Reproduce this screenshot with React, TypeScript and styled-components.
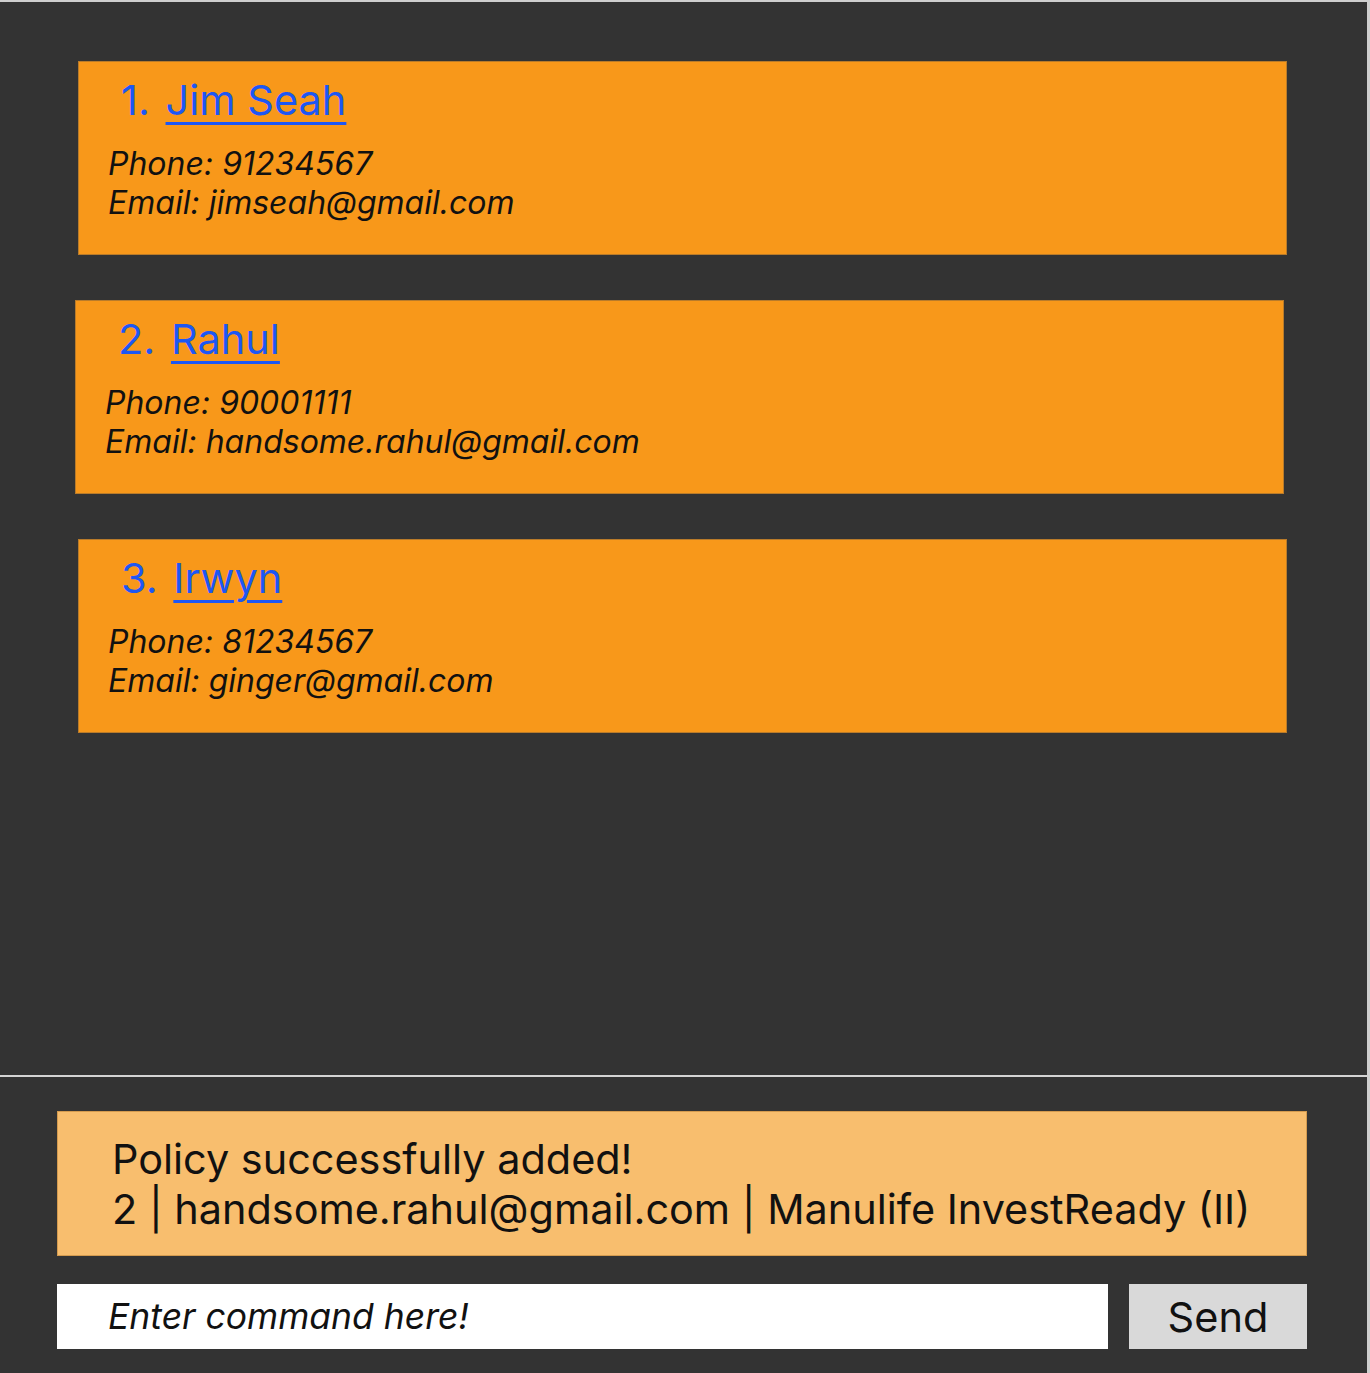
import React from "react";
import styled, { createGlobalStyle } from "styled-components";

const Global = createGlobalStyle`
  html, body { margin: 0; padding: 0; background: #333333; }
  body { font-family: Inter, "Noto Sans", "Liberation Sans", sans-serif; }
  * { box-sizing: border-box; }
`;

const Frame = styled.div`
  height: 1373px;
  width: 1370px;
  display: flex;
  flex-direction: column;
  background: #333333;
  border-top: 2px solid #cfcfcf;
  border-right: 3px solid #cfcfcf;
`;

const ListArea = styled.div`
  flex: 1;
  display: flex;
  flex-direction: column;
  gap: 45px;
  padding: 59px 0 0 78px;
  border-bottom: 2px solid #d4d4d4;
`;

const Card = styled.div<{ $shift: number }>`
  width: 1209px;
  height: 194px;
  margin-left: ${(p) => p.$shift}px;
  background: #f8981a;
  border: 1px solid #b97b2a;
  padding: 14px 0 0 0;
  display: flex;
  flex-direction: column;
  gap: 20px;
`;

const Title = styled.div`
  font-size: 41.5px;
  line-height: 48px;
  color: #1d57f4;
  padding-left: 42px;
  white-space: pre;
`;

const Name = styled.span`
  margin-left: 4px;
  text-decoration: underline;
  text-decoration-thickness: 3px;
  text-underline-offset: 7px;
`;

const Details = styled.div`
  padding-left: 29px;
  font-size: 32px;
  line-height: 39px;
  font-style: italic;
  color: #111111;
`;

const Bottom = styled.div`
  display: flex;
  flex-direction: column;
  gap: 28px;
  padding: 34px 0 24px 57px;
`;

const ResultBox = styled.div`
  width: 1250px;
  height: 145px;
  background: #f8be6e;
  border: 1px solid #d49b4f;
  padding: 22px 0 0 54px;
  font-size: 41.4px;
  line-height: 50px;
  color: #111111;
`;

const InputRow = styled.div`
  display: flex;
  gap: 21px;
  height: 65px;
`;

const CommandInput = styled.input`
  width: 1051px;
  height: 65px;
  border: none;
  outline: none;
  background: #ffffff;
  padding: 0 0 0 51px;
  font-family: Inter, "Noto Sans", sans-serif;
  font-size: 35.5px;
  font-style: italic;
  color: #111111;
  &::placeholder {
    color: #111111;
    opacity: 1;
  }
`;

const SendButton = styled.button`
  width: 178px;
  height: 65px;
  border: none;
  background: #d9d9d9;
  font-family: Inter, "Noto Sans", sans-serif;
  font-size: 41.5px;
  color: #111111;
  padding: 0;
  cursor: pointer;
`;

const persons = [
  { n: 1, name: "Jim Seah", phone: "91234567", email: "jimseah@gmail.com", shift: 0 },
  { n: 2, name: "Rahul", phone: "90001111", email: "handsome.rahul@gmail.com", shift: -3 },
  { n: 3, name: "Irwyn", phone: "81234567", email: "ginger@gmail.com", shift: 0 },
];

export default function App() {
  return (
    <>
      <Global />
      <Frame>
        <ListArea>
          {persons.map((p) => (
            <Card key={p.n} $shift={p.shift}>
              <Title>
                {p.n}. <Name>{p.name}</Name>
              </Title>
              <Details>
                <div>Phone: {p.phone}</div>
                <div>Email: {p.email}</div>
              </Details>
            </Card>
          ))}
        </ListArea>
        <Bottom>
          <ResultBox>
            <div>Policy successfully added!</div>
            <div>2 | handsome.rahul@gmail.com | Manulife InvestReady (II)</div>
          </ResultBox>
          <InputRow>
            <CommandInput placeholder="Enter command here!" />
            <SendButton>Send</SendButton>
          </InputRow>
        </Bottom>
      </Frame>
    </>
  );
}
